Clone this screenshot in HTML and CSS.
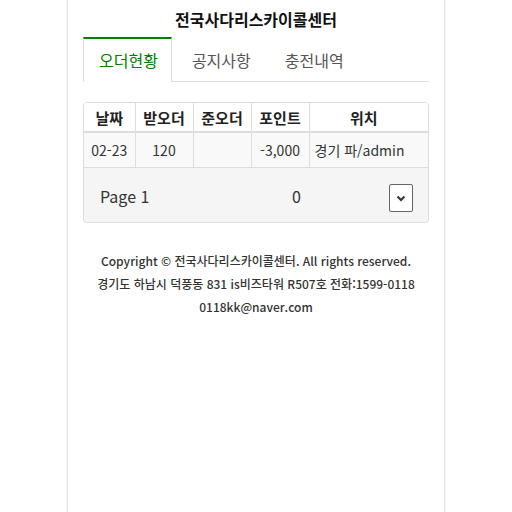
FILE: index.html
```html
<!DOCTYPE html>
<html lang="ko">
<head>
<meta charset="utf-8">
<title>전국사다리스카이콜센터</title>
<link rel="stylesheet" href="styles.css">
</head>
<body>
<div class="page">
  <div class="inner">
    <h1 class="title">전국사다리스카이콜센터</h1>
    <ul class="tabs">
      <li class="tab active">오더현황</li>
      <li class="tab">공지사항</li>
      <li class="tab">충전내역</li>
    </ul>
    <div class="panel">
      <table class="grid">
        <colgroup>
          <col class="c1"><col class="c2"><col class="c3"><col class="c4"><col class="c5">
        </colgroup>
        <thead>
          <tr><th>날짜</th><th>받오더</th><th>준오더</th><th>포인트</th><th class="loc-h">위치</th></tr>
        </thead>
        <tbody>
          <tr><td>02-23</td><td>120</td><td></td><td>-3,000</td><td class="loc">경기 파/admin</td></tr>
        </tbody>
      </table>
      <div class="pager">
        <span class="page-label">Page 1</span>
        <span class="count">0</span>
        <span class="drop">
          <svg width="10" height="7" viewBox="0 0 10 7"><path d="M1.5 1.5 L5 5 L8.5 1.5" fill="none" stroke="#333" stroke-width="2"/></svg>
        </span>
      </div>
    </div>
    <div class="footer">
      <p>Copyright © 전국사다리스카이콜센터. All rights reserved.</p>
      <p>경기도 하남시 덕풍동 831 is비즈타워 R507호 전화:1599-0118</p>
      <p>0118kk@naver.com</p>
    </div>
  </div>
</div>
</body>
</html>
```
FILE: styles.css
```css
html, body {
  margin: 0;
  padding: 0;
  background: #fff;
}
body {
  font-family: "Noto Sans CJK KR", "Noto Sans", sans-serif;
  color: #333;
}
.page {
  width: 376px;
  margin: 0 auto;
  min-height: 512px;
  border-left: 1px solid #e2e2e2;
  border-right: 1px solid #e2e2e2;
  box-shadow: 0 0 2px rgba(0,0,0,0.12);
}
.inner {
  padding: 0 15px;
}
.title {
  margin: 0;
  height: 37px;
  line-height: 38px;
  font-size: 16px;
  font-weight: bold;
  color: #111;
  text-align: center;
}
.tabs {
  list-style: none;
  margin: 0;
  padding: 0;
  display: flex;
  border-bottom: 1px solid #ddd;
}
.tab {
  height: 42px;
  line-height: 42px;
  padding: 0 13px 0 15px;
  margin-right: 4px;
  margin-bottom: -1px;
  font-size: 16px;
  color: #555;
  border: 1px solid transparent;
  border-top-width: 2px;
}
.tab.active {
  color: #008000;
  background: #fff;
  border-color: #ddd;
  border-top-color: #008000;
  border-bottom-color: #fff;
}
.panel {
  margin-top: 20px;
  border: 1px solid #ddd;
  border-radius: 4px;
  overflow: hidden;
  background: #f5f5f5;
}
.grid {
  width: 100%;
  border-collapse: collapse;
  table-layout: fixed;
  background: #fff;
}
.c1 { width: 51px; }
.c2 { width: 58px; }
.c3 { width: 58px; }
.c4 { width: 58px; }
.grid th, .grid td {
  border-left: 1px solid #ddd;
  text-align: center;
  padding: 0 4px;
  white-space: nowrap;
}
.grid th:first-child, .grid td:first-child {
  border-left: none;
}
.grid th {
  height: 28px;
  font-size: 15px;
  font-weight: bold;
  color: #222;
  border-bottom: 2px solid #ddd;
}
.grid th.loc-h {
  padding-right: 14px;
}
.grid td {
  height: 34px;
  font-size: 14px;
  color: #333;
  background: #f9f9f9;
  border-bottom: 1px solid #ddd;
}
.grid td.loc {
  text-align: left;
  padding-left: 5px;
}
.pager {
  height: 54px;
  box-sizing: border-box;
  padding: 1px 15px 0 16px;
  display: flex;
  align-items: center;
  font-size: 16px;
  color: #333;
}
.page-label {
  flex: 1;
}
.count {
  margin-right: 88px;
}
.drop {
  width: 22px;
  height: 26px;
  margin-top: 5px;
  border: 1px solid #666;
  border-radius: 2px;
  background: #fff;
  display: flex;
  align-items: center;
  justify-content: center;
}
.footer {
  padding-top: 26px;
  text-align: center;
  font-size: 12px;
  font-weight: 500;
  color: #333;
}
.footer p {
  margin: 0;
  line-height: 23px;
}
```
